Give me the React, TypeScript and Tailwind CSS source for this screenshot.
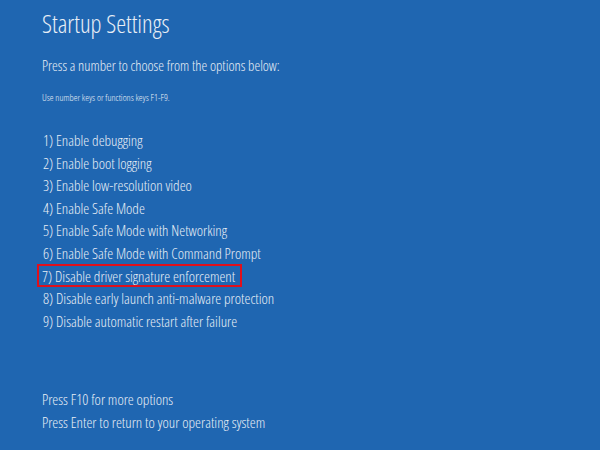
const options = [
  "1) Enable debugging",
  "2) Enable boot logging",
  "3) Enable low-resolution video",
  "4) Enable Safe Mode",
  "5) Enable Safe Mode with Networking",
  "6) Enable Safe Mode with Command Prompt",
  "7) Disable driver signature enforcement",
  "8) Disable early launch anti-malware protection",
  "9) Disable automatic restart after failure",
];

export default function App() {
  return (
    <div className="w-[600px] h-[450px] overflow-hidden bg-[#1f66b1] text-[#e8eef6] pl-[42px] font-['Open_Sans',sans-serif] font-light font-stretch-[80%]">
      <h1 className="pt-[7px] text-[25px] leading-[32px]">Startup Settings</h1>
      <p className="mt-[18px] text-[14.5px] leading-[18px]">
        Press a number to choose from the options below:
      </p>
      <p className="mt-[16px] text-[9.5px] leading-[14px]">
        Use number keys or functions keys F1-F9.
      </p>
      <ul className="mt-[24px] flex flex-col text-[15px]">
        {options.map((o, i) => (
          <li key={o} className="h-[22.6px] flex items-center">
            {i === 6 ? (
              <span className="-ml-[5px] pl-[3px] pr-[5px] border-2 border-[#e0101c] h-[23px] flex items-center">{o}</span>
            ) : (
              <span className="ml-[1px]">{o}</span>
            )}
          </li>
        ))}
      </ul>
      <div className="mt-[56px] flex flex-col text-[15px]">
        <p className="h-[22.6px] flex items-center">Press F10 for more options</p>
        <p className="h-[22.6px] flex items-center">Press Enter to return to your operating system</p>
      </div>
    </div>
  );
}
